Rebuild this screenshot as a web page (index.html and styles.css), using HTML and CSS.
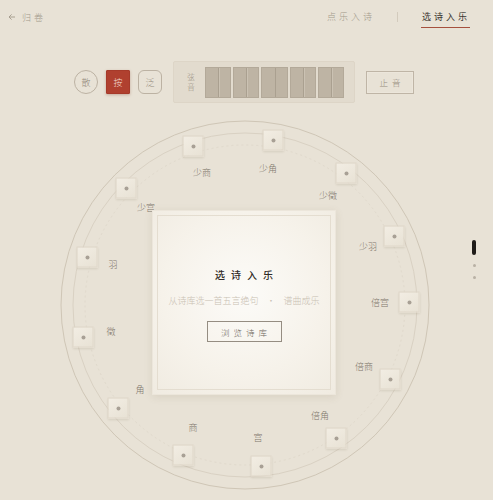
FILE: index.html
```html
<!DOCTYPE html>
<html lang="zh">
<head>
    <meta charset="UTF-8">
    <meta name="viewport" content="width=device-width, initial-scale=1.0">
    <link rel="stylesheet" href="styles.css">
</head>
<body>
    <!-- 顶部导航 -->
    <div class="topbar">
        <div class="back">
            <svg class="back-arrow" viewBox="0 0 8 8"><path d="M7 4H1.2M3.6 1.4L1 4l2.6 2.6" /></svg>
            <span>归卷</span>
        </div>
        <div class="tabs">
            <span class="tab">点乐入诗</span>
            <span class="tab-sep"></span>
            <span class="tab active">选诗入乐</span>
        </div>
    </div>

    <!-- 指法与弦音 -->
    <div class="controls">
        <button class="mode mode-round">散</button>
        <button class="mode mode-on">按</button>
        <button class="mode mode-soft">泛</button>
        <div class="strings">
            <div class="strings-label"><span>弦</span><span>音</span></div>
            <div class="string"></div>
            <div class="string"></div>
            <div class="string"></div>
            <div class="string"></div>
            <div class="string"></div>
        </div>
        <button class="stop">止音</button>
    </div>

    <!-- 徽位圆盘 -->
    <div class="stage">
        <svg class="rings" viewBox="0 0 400 400">
            <circle cx="200" cy="200" r="184" class="ring-outer" />
            <circle cx="200" cy="200" r="172" class="ring-mid" />
            <circle cx="200" cy="200" r="160" class="ring-inner" />
        </svg>

        <div class="node" style="left:228px;top:35px"></div>
        <div class="node" style="left:301px;top:68px"></div>
        <div class="node" style="left:349px;top:131px"></div>
        <div class="node" style="left:364px;top:197px"></div>
        <div class="node" style="left:345px;top:274px"></div>
        <div class="node" style="left:291px;top:333px"></div>
        <div class="node" style="left:216px;top:361px"></div>
        <div class="node" style="left:138px;top:350px"></div>
        <div class="node" style="left:73px;top:303px"></div>
        <div class="node" style="left:38px;top:232px"></div>
        <div class="node" style="left:42px;top:152px"></div>
        <div class="node" style="left:81px;top:83px"></div>
        <div class="node" style="left:148px;top:41px"></div>

        <span class="node-label" style="left:223px;top:64px">少角</span>
        <span class="node-label" style="left:283px;top:91px">少徵</span>
        <span class="node-label" style="left:323px;top:142px">少羽</span>
        <span class="node-label" style="left:335px;top:198px">倍宫</span>
        <span class="node-label" style="left:319px;top:262px">倍商</span>
        <span class="node-label" style="left:275px;top:311px">倍角</span>
        <span class="node-label" style="left:213px;top:333px">宫</span>
        <span class="node-label" style="left:148px;top:323px">商</span>
        <span class="node-label" style="left:95px;top:285px">角</span>
        <span class="node-label" style="left:66px;top:227px">徵</span>
        <span class="node-label" style="left:68px;top:160px">羽</span>
        <span class="node-label" style="left:101px;top:103px">少宫</span>
        <span class="node-label" style="left:157px;top:68px">少商</span>

        <div class="card">
            <div class="card-title">选诗入乐</div>
            <div class="card-sub">从诗库选一首五言绝句<span class="dot">·</span>谱曲成乐</div>
            <button class="browse">浏览诗库</button>
        </div>
    </div>

    <!-- 右侧分页 -->
    <div class="pager">
        <span class="pager-bar"></span>
        <span class="pager-dot"></span>
        <span class="pager-dot"></span>
    </div>
</body>
</html>
```

FILE: styles.css
```css
/* 基础 */
body {
    margin: 0;
    width: 493px;
    height: 500px;
    overflow: hidden;
    background-color: #e8e2d6;
    color: #8d857a;
    font-family: "Noto Sans CJK SC", "Noto Sans", sans-serif;
    font-weight: 300;
}

button {
    font-family: inherit;
    font-weight: inherit;
    background: none;
    padding: 0;
    cursor: pointer;
}

/* 顶部导航 */
.topbar {
    height: 34px;
    display: flex;
    align-items: center;
    justify-content: space-between;
    padding: 0 23px 0 8px;
}

.back {
    display: flex;
    align-items: center;
    gap: 6px;
    font-size: 9px;
    letter-spacing: 3px;
    color: #a39a8b;
}

.back-arrow {
    width: 8px;
    height: 8px;
    fill: none;
    stroke: #a39a8b;
    stroke-width: 0.9;
}

.tabs {
    display: flex;
    align-items: center;
}

.tab {
    font-size: 9px;
    letter-spacing: 3px;
    line-height: 12px;
    color: #a39a8b;
    padding: 4px 0 4px 1px;
    border-bottom: 1px solid transparent;
}

.tab.active {
    color: #3b3631;
    font-weight: 400;
    border-bottom-color: #a5503e;
}

.tab-sep {
    width: 1px;
    height: 10px;
    background-color: #d3cbbd;
    margin: 0 23px 0 22px;
}

/* 指法与弦音 */
.controls {
    display: flex;
    align-items: center;
    margin-top: 27px;
    padding-left: 74px;
    height: 42px;
}

.mode {
    width: 24px;
    height: 24px;
    margin-right: 8px;
    font-size: 9px;
    color: #958b7c;
    border: 1px solid #bcb2a3;
    box-sizing: border-box;
}

.mode-round {
    border-radius: 50%;
}

.mode-on {
    background-color: #b0402f;
    border-color: #a63a2a;
    color: #f3ddd2;
    border-radius: 1px;
    box-shadow: 0 1px 3px rgba(120, 40, 20, 0.3);
}

.mode-soft {
    border-radius: 6px;
    margin-right: 11px;
}

.strings {
    display: flex;
    align-items: center;
    gap: 2px;
    width: 182px;
    height: 42px;
    box-sizing: border-box;
    padding: 0 10px 0 13px;
    background-color: #e2dbce;
    border: 1px solid #ddd5c7;
    border-radius: 2px;
}

.strings-label {
    display: flex;
    flex-direction: column;
    align-items: center;
    width: 8px;
    margin-right: 8px;
    font-size: 7.5px;
    line-height: 10px;
    color: #968d80;
}

.string {
    width: 27px;
    height: 31px;
    box-sizing: border-box;
    border: 1px solid #b3a999;
    background:
        linear-gradient(to right, transparent 51%, #aaa090 51%, #aaa090 55%, #cbc2b3 55%, #cbc2b3 58%, transparent 58%),
        #beb4a4;
}

.stop {
    margin-left: 11px;
    width: 48px;
    height: 23px;
    box-sizing: border-box;
    border: 1.5px solid #bfb5a6;
    box-shadow: inset 0 0 0 1px #ece6db;
    font-size: 8.5px;
    letter-spacing: 4px;
    padding-left: 4px;
    color: #958b7c;
}

/* 徽位圆盘 */
.stage {
    position: relative;
    width: 400px;
    height: 400px;
    margin: 2px 0 0 45px;
    display: flex;
    align-items: center;
    justify-content: center;
}

.rings {
    position: absolute;
    left: 0;
    top: 0;
    width: 400px;
    height: 400px;
    fill: none;
}

.ring-outer {
    stroke: #cfc6b6;
    stroke-width: 1;
}

.ring-mid {
    stroke: #d9d1c3;
    stroke-width: 1;
}

.ring-inner {
    stroke: #e0d9cc;
    stroke-width: 1;
    stroke-dasharray: 2 3;
}

.node {
    position: absolute;
    width: 21px;
    height: 21px;
    box-sizing: border-box;
    transform: translate(-50%, -50%);
    background: linear-gradient(145deg, #f2ede3, #e8e2d5);
    border: 1px solid #e0d8ca;
    box-shadow: 0 1px 2px rgba(90, 70, 40, 0.12);
}

.node::after {
    content: "";
    position: absolute;
    left: 50%;
    top: 50%;
    width: 4px;
    height: 4px;
    margin: -2px 0 0 -2px;
    border-radius: 50%;
    background-color: #a8a095;
}

.node-label {
    position: absolute;
    transform: translate(-50%, -50%);
    font-size: 9px;
    line-height: 10px;
    white-space: nowrap;
    color: #7f776c;
}

/* 中央卡片 */
.card {
    position: relative;
    width: 184px;
    height: 185px;
    box-sizing: border-box;
    margin: 0 2px 5px 0;
    padding-top: 57px;
    text-align: center;
    background: radial-gradient(circle at 50% 45%, #fcfbf8 0%, #f6f2ea 60%, #f0ebe1 100%);
    border: 1px solid #ece6db;
    box-shadow: 0 2px 8px rgba(110, 90, 60, 0.12);
}

.card::before {
    content: "";
    position: absolute;
    inset: 4px;
    border: 1px solid #e4ddd0;
    pointer-events: none;
}

.card-title {
    font-size: 10px;
    line-height: 14px;
    letter-spacing: 6px;
    padding-left: 6px;
    color: #2f2a25;
    font-weight: 500;
}

.card-sub {
    margin-top: 13px;
    font-size: 9px;
    line-height: 12px;
    color: #c9c1b3;
    white-space: nowrap;
}

.card-sub .dot {
    margin: 0 8px;
}

.browse {
    margin-top: 14px;
    width: 75px;
    height: 21px;
    border: 1px solid #958d82;
    font-size: 8.5px;
    letter-spacing: 4px;
    padding-left: 4px;
    color: #6e665c;
}

/* 右侧分页 */
.pager {
    position: fixed;
    right: 17px;
    top: 240px;
    display: flex;
    flex-direction: column;
    align-items: center;
    gap: 6px;
}

.pager-bar {
    width: 4px;
    height: 15px;
    border-radius: 2px;
    background-color: #1f1c19;
}

.pager-dot {
    width: 3px;
    height: 3px;
    border-radius: 50%;
    background-color: #b9b1a5;
    margin-top: 3px;
}
```
